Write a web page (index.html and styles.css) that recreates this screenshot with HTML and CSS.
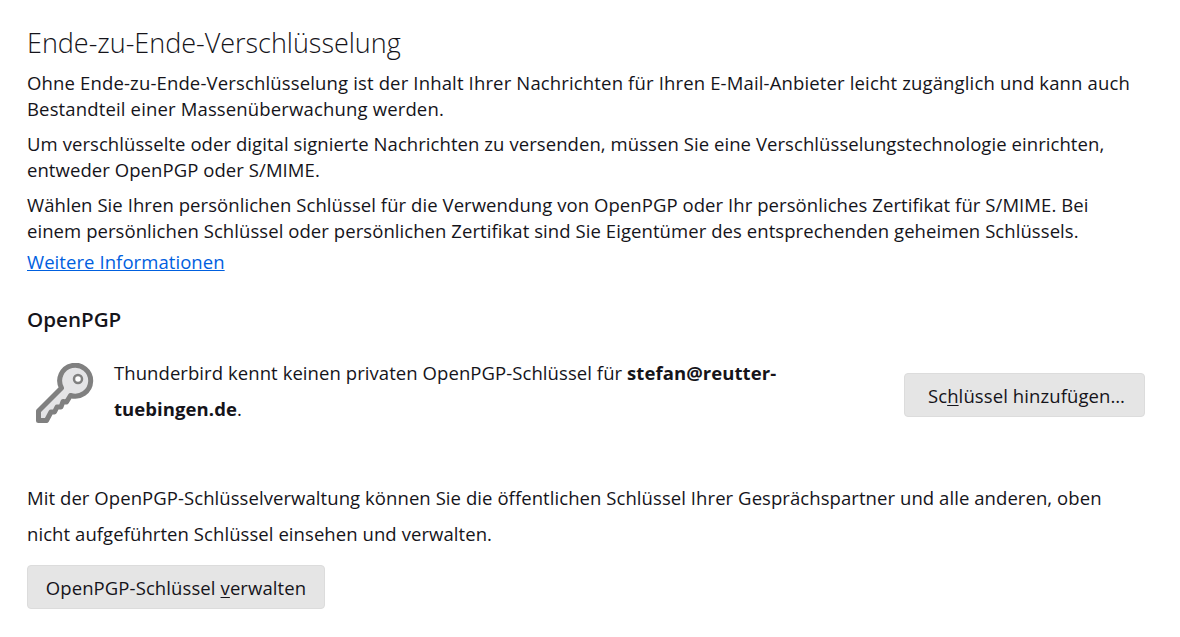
FILE: index.html
```html
<!DOCTYPE html>
<html lang="de">
<head>
<meta charset="utf-8">
<title>Ende-zu-Ende-Verschlüsselung</title>
<link rel="stylesheet" href="styles.css">
</head>
<body>
<main class="page">
  <h1 class="title">Ende-zu-Ende-Verschlüsselung</h1>
  <p class="intro">Ohne Ende-zu-Ende-Verschlüsselung ist der Inhalt Ihrer Nachrichten für Ihren E-Mail-Anbieter leicht zugänglich und kann auch Bestandteil einer Massenüberwachung werden.</p>
  <p class="intro intro-tight">Um verschlüsselte oder digital signierte Nachrichten zu versenden, müssen Sie eine Verschlüsselungstechnologie einrichten, entweder OpenPGP oder S/MIME.</p>
  <p class="intro intro-tight">Wählen Sie Ihren persönlichen Schlüssel für die Verwendung von OpenPGP oder Ihr persönliches Zertifikat für S/MIME. Bei einem persönlichen Schlüssel oder persönlichen Zertifikat sind Sie Eigentümer des entsprechenden geheimen Schlüssels.</p>
  <a class="more" href="#">Weitere Informationen</a>
  <h2 class="section">OpenPGP</h2>
  <div class="keyrow">
    <svg class="keyicon" viewBox="0 0 60 60" aria-hidden="true">
      <path class="keyshape" d="M26.500 25A15.500 15.500 0 1 1 35.500 32.500L31.500 39L28 38.500L26 44L22 44L19.500 49L16 49L11.500 57.500H3.500V48Z"/>
      <circle class="keyhole" cx="43" cy="16" r="4"/>
    </svg>
    <p class="keytext">Thunderbird kennt keinen privaten OpenPGP-Schlüssel für <strong>stefan@reutter-tuebingen.de</strong>.</p>
    <button class="btn btn-add" type="button">Sc<span class="ul">h</span>lüssel hinzufügen…</button>
  </div>
  <p class="manage">Mit der OpenPGP-Schlüsselverwaltung können Sie die öffentlichen Schlüssel Ihrer Gesprächspartner und alle anderen, oben nicht aufgeführten Schlüssel einsehen und verwalten.</p>
  <button class="btn btn-manage" type="button">OpenPGP-Schlüssel <span class="ul">v</span>erwalten</button>
</main>
</body>
</html>
```
FILE: styles.css
```css
* { box-sizing: border-box; }
html, body { margin: 0; background: #fff; }
body {
  font-family: "Open Sans", "Noto Sans", sans-serif;
  font-size: 18.5px;
  letter-spacing: 0.07px;
  color: #15141a;
  overflow: hidden;
}
.page { width: 1180px; height: 637px; padding: 25px 35px 0 27px; }
.title {
  margin: 0 0 9px;
  font-size: 27px;
  font-weight: 300;
  line-height: 36px;
  letter-spacing: -0.02px;
}
.intro { margin: 0 0 9px; line-height: 26px; width: 1118px; letter-spacing: 0.15px; }
.intro-tight { letter-spacing: 0.07px; }
.more { display: block; color: #0060df; line-height: 26px; margin-top: -4px; width: max-content; }
.section { margin: 29px 0 0; font-size: 20.6px; font-weight: 600; line-height: 30px; letter-spacing: 0; }
.keyrow { display: flex; align-items: center; margin-top: 21px; height: 72px; }
.keyicon { width: 60px; height: 60px; margin: 4px 19px 0 8px; flex: none; }
.keyshape { fill: #e4e4e6; stroke: #808080; stroke-width: 5; stroke-linejoin: round; }
.keyhole { fill: #fff; stroke: #808080; stroke-width: 2.500; }
.keytext { margin: 0; flex: 1; line-height: 36px; max-width: 680px; }
.btn {
  font: inherit;
  letter-spacing: 0.1px;
  color: inherit;
  background: #e5e5e5;
  border: 1px solid #dcdcdc;
  border-radius: 4px;
  height: 44px;
  padding: 0;
}
.btn-add { width: 241px; margin-left: auto; padding-left: 4px; position: relative; top: 4px; }
.ul { text-decoration: underline; text-underline-offset: 2px; }
.manage { margin: 53px 0 13px; line-height: 36px; width: 1090px; }
.btn-manage { width: 298px; }
```
